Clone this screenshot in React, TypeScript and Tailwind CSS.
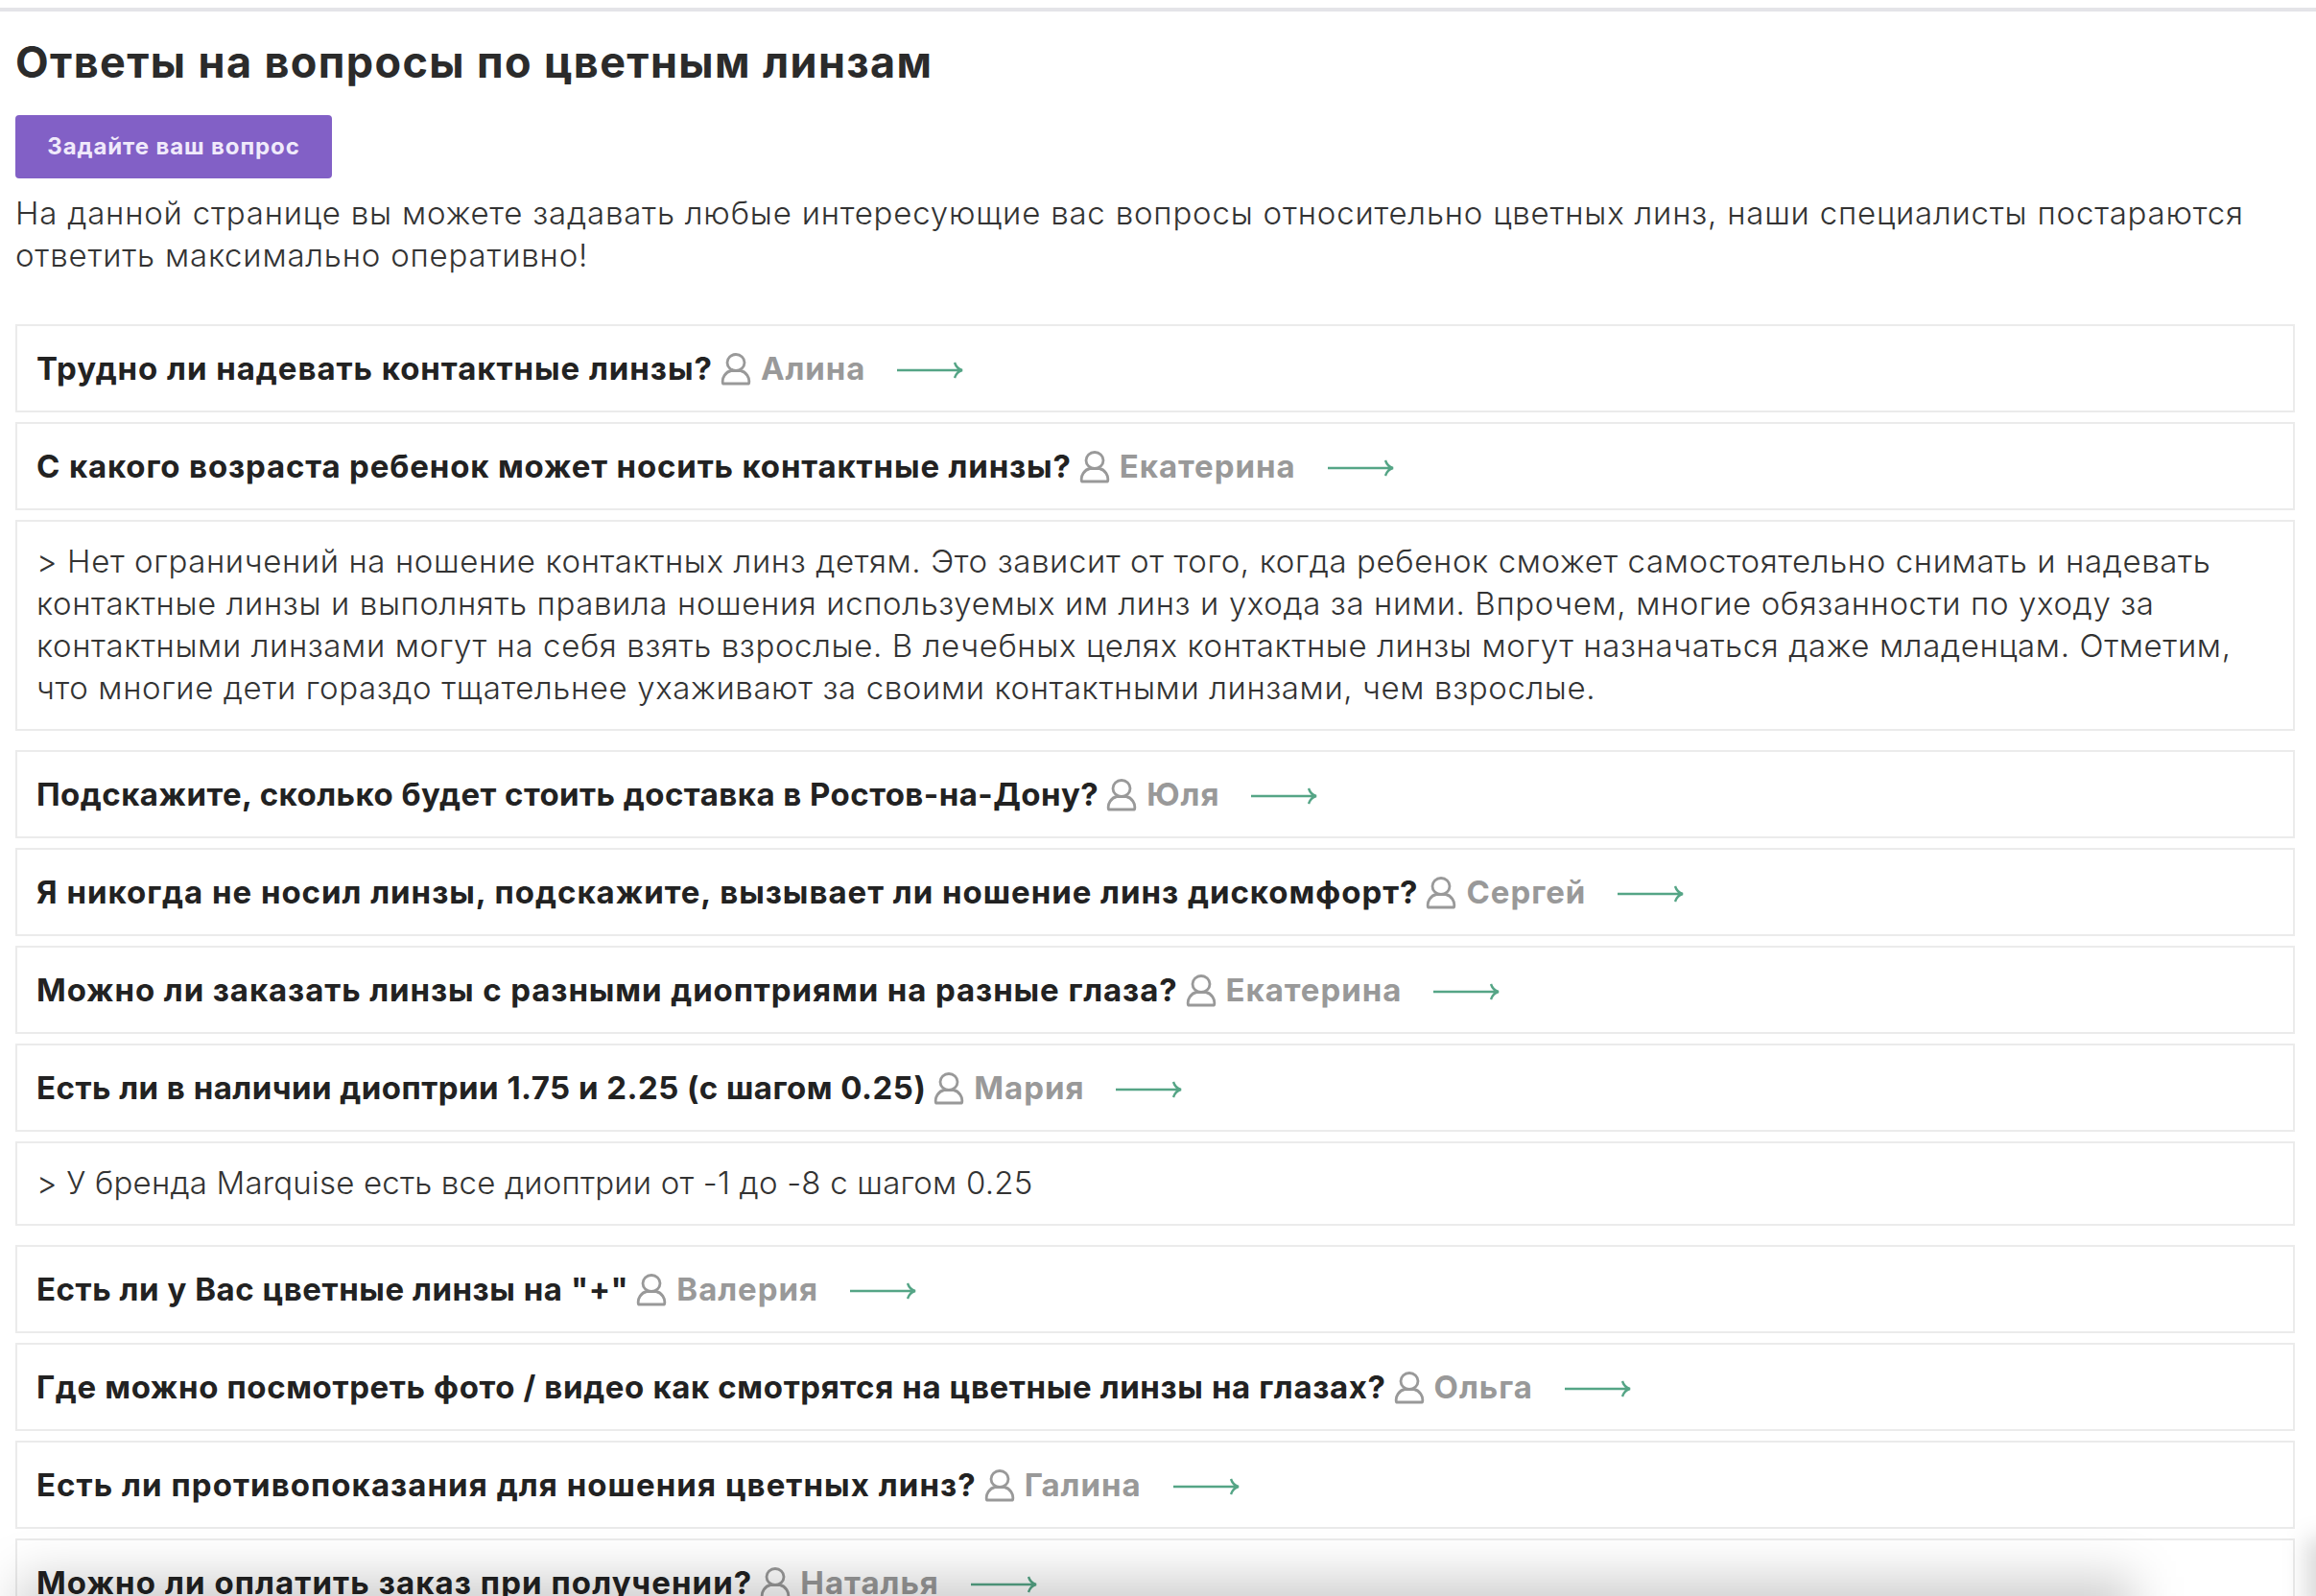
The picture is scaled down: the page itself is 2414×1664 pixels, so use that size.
import { ReactNode } from 'react'

// Questions and answers in the order they appear on the page.
// track: per-question letter spacing so each line keeps the reference width
const items: { q: string; name: string; track: string; answer?: string; answerTrack?: string }[] = [
  { q: 'Трудно ли надевать контактные линзы?', name: 'Алина', track: 'tracking-[0.95px]' },
  {
    q: 'С какого возраста ребенок может носить контактные линзы?',
    name: 'Екатерина',
    track: 'tracking-[0.84px]',
    answer:
      '> Нет ограничений на ношение контактных линз детям. Это зависит от того, когда ребенок сможет самостоятельно снимать и надевать контактные линзы и выполнять правила ношения используемых им линз и ухода за ними. Впрочем, многие обязанности по уходу за контактными линзами могут на себя взять взрослые. В лечебных целях контактные линзы могут назначаться даже младенцам. Отметим, что многие дети гораздо тщательнее ухаживают за своими контактными линзами, чем взрослые.',
    answerTrack: 'tracking-[0.62px]',
  },
  { q: 'Подскажите, сколько будет стоить доставка в Ростов-на-Дону?', name: 'Юля', track: 'tracking-[0.45px]' },
  { q: 'Я никогда не носил линзы, подскажите, вызывает ли ношение линз дискомфорт?', name: 'Сергей', track: 'tracking-[0.97px]' },
  { q: 'Можно ли заказать линзы с разными диоптриями на разные глаза?', name: 'Екатерина', track: 'tracking-[0.9px]' },
  {
    q: 'Есть ли в наличии диоптрии 1.75 и 2.25 (с шагом 0.25)',
    name: 'Мария',
    track: 'tracking-[0.47px]',
    answer: '> У бренда Marquise есть все диоптрии от -1 до -8 с шагом 0.25',
    answerTrack: 'tracking-[0.2px]',
  },
  { q: 'Есть ли у Вас цветные линзы на "+"', name: 'Валерия', track: 'tracking-[0.54px]' },
  { q: 'Где можно посмотреть фото / видео как смотрятся на цветные линзы на глазах?', name: 'Ольга', track: 'tracking-[0.62px]' },
  { q: 'Есть ли противопоказания для ношения цветных линз?', name: 'Галина', track: 'tracking-[1.05px]' },
  { q: 'Можно ли оплатить заказ при получении?', name: 'Наталья', track: 'tracking-[1.08px]' },
]

function UserIcon() {
  return (
    <svg width="32" height="34" viewBox="0 0 32 34" fill="none" stroke="#999999" strokeWidth="2.8" className="shrink-0">
      <ellipse cx="16" cy="10" rx="9" ry="8.500" />
      <path d="M2.500 32c-1.500-6 3-12.500 8.500-13.500h10c5.500 1 10 7.500 8.500 13.500z" strokeLinejoin="round" />
    </svg>
  )
}

function ArrowIcon() {
  return (
    <svg width="70" height="18" viewBox="0 0 70 18" fill="none" stroke="#55a586" strokeWidth="2.4" className="shrink-0">
      <path d="M0 9h68M60 1c1 3 4 7 8 8-4 1-7 5-8 8" />
    </svg>
  )
}

function Box({ children, className }: { children: ReactNode; className: string }) {
  return <div className={'border-2 border-[#ebebeb] px-[20px] ' + className}>{children}</div>
}

export default function App() {
  return (
    <div className="relative h-[1664px] overflow-hidden bg-white text-[#222] font-['Inter','Noto_Sans',sans-serif]">
      <div className="h-[12px] border-b-[4px] border-[#e4e4e8]" />
      <div className="px-[16px]">
        <h1 className="mt-[26px] text-[45px] leading-[54px] font-bold tracking-[1.37px] text-[#2b2b2b]">
          Ответы на вопросы по цветным линзам
        </h1>
        <button className="mt-[28px] block h-[66px] w-[330px] rounded-[4px] bg-[#8260c6] text-[24px] font-bold tracking-[0.9px] text-[#f0eafb]">
          Задайте ваш вопрос
        </button>
        <p className="mt-[14px] text-[33px] leading-[44px] font-light tracking-[0.8px] text-[#333]">
          На данной странице вы можете задавать любые интересующие вас вопросы относительно цветных линз, наши специалисты постараются ответить максимально оперативно!
        </p>

        <div className="mt-[50px] flex w-[2376px] flex-col">
          {items.map((item) => (
            <div key={item.q}>
              <Box className="mb-[10px] flex h-[92px] items-center pt-[2px] text-[33px] font-bold">
                <span className={'text-[#222] ' + item.track}>{item.q}</span>
                <span className="ml-[8px]"><UserIcon /></span>
                <span className="ml-[10px] tracking-[0.95px] text-[#999]">{item.name}</span>
                <span className="mt-[2px] ml-[33px]"><ArrowIcon /></span>
              </Box>
              {item.answer && (
                <Box className={'mb-[20px] pt-[19px] pb-[21px] text-[33px] leading-[44px] font-light text-[#333] ' + item.answerTrack}>
                  {item.answer}
                </Box>
              )}
            </div>
          ))}
        </div>
      </div>
      {/* soft grey shadows at the bottom of the capture */}
      <div className="pointer-events-none absolute bottom-[-50px] left-[20px] right-[190px] h-[70px] bg-[#00000030] blur-[25px]" />
      <div className="pointer-events-none absolute right-[-30px] bottom-[-20px] h-[80px] w-[40px] bg-[#00000026] blur-[12px]" />
    </div>
  )
}
